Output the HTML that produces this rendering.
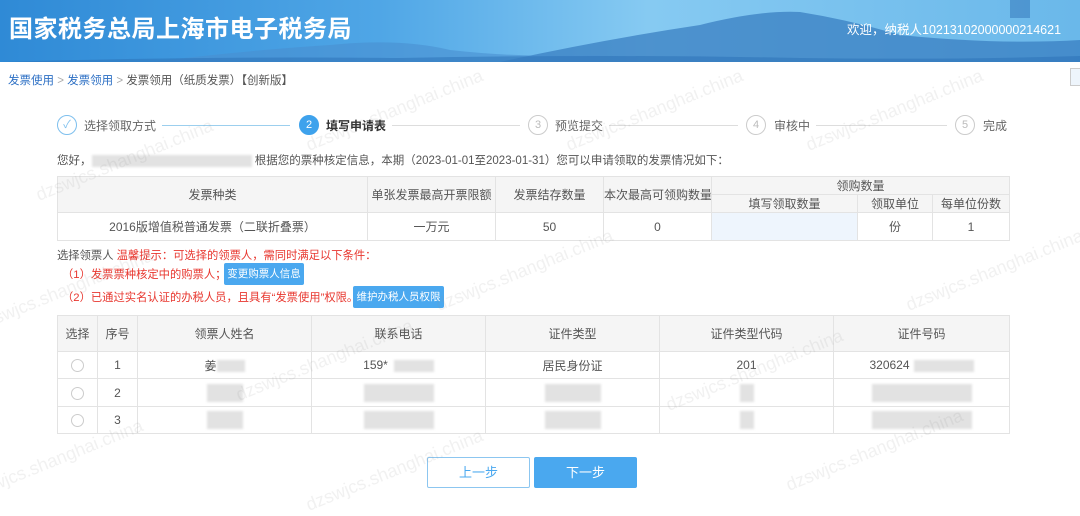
<!DOCTYPE html>
<html><head><meta charset="utf-8"><style>
*{margin:0;padding:0;box-sizing:border-box}
body{width:1080px;height:503px;overflow:hidden;background:#fff;font-family:"Liberation Sans","Noto Sans CJK SC",sans-serif;font-size:12px;color:#555;position:relative}
.abs{position:absolute;white-space:nowrap}
.hdr{position:absolute;left:0;top:0;width:1080px;height:62px;background:linear-gradient(90deg,#2f8ad6 0%,#4fa6e6 35%,#86caf2 60%,#6ab8ea 100%);overflow:hidden}
table{position:absolute;border-collapse:collapse;table-layout:fixed}
td{border:1px solid #e3e3e3;text-align:center;font-size:12px;color:#555;overflow:hidden;white-space:nowrap}
.th td{background:#f5f5f5}
.circ{position:absolute;width:20px;height:20px;border-radius:50%;border:1px solid #ccc;color:#bbb;font-size:11px;text-align:center;line-height:18px}
.line{position:absolute;height:1px;background:#ddd;top:125px}
.red{color:#e8372f}
.btn{position:absolute;background:#4aa8ef;color:#fff;font-size:10.5px;text-align:center;border-radius:2px}
.blur{display:inline-block;background:#e2e2e2;height:12px;vertical-align:middle;filter:blur(1px)}
.wm{position:absolute;color:rgba(150,150,150,.13);font-size:18px;transform:rotate(-22deg);white-space:nowrap}
.radio{display:inline-block;width:13px;height:13px;border:1px solid #ccc;border-radius:50%;vertical-align:middle}
</style></head><body>
<div class="hdr">
<svg width="1080" height="62" style="position:absolute;left:0;top:0">
<path d="M500 62 Q600 40 700 25 Q760 10 800 12 Q850 20 900 35 Q1000 45 1080 40 L1080 62Z" fill="#3a7fc2" opacity=".75"/>
<path d="M150 62 Q250 50 330 45 Q400 38 450 50 Q520 58 600 55 L600 62Z" fill="#4a90d0" opacity=".6"/>
<path d="M0 62 Q200 56 400 58 Q600 54 800 58 Q950 60 1080 56 L1080 62Z" fill="#2a70b5" opacity=".5"/>
<rect x="1010" y="0" width="20" height="18" fill="#3b7fbf" opacity=".6"/>
</svg>
<div class="abs" style="left:9px;top:9px;font-size:24px;font-weight:bold;color:#fff;letter-spacing:0.5px">国家税务总局上海市电子税务局</div>
<div class="abs" style="left:847px;top:19px;font-size:12.5px;color:#fff">欢迎，纳税人10213102000000214621</div>
</div>
<div class="abs" style="left:8px;top:72px;color:#2c6fc4;font-size:11.5px">发票使用 <span style="color:#aaa">&gt;</span> 发票领用 <span style="color:#aaa">&gt;</span> <span style="color:#555">发票领用（纸质发票）【创新版】</span></div>
<div class="abs" style="left:1070px;top:68px;width:12px;height:18px;border:1px solid #ccc;background:#eef5fc"></div>

<div class="circ" style="left:57px;top:115px;border-color:#7fc0ee;color:#7fc0ee">✓</div>
<div class="abs" style="left:84px;top:117px;color:#666">选择领取方式</div>
<div class="line" style="left:162px;width:128px;background:#9ccfee"></div>
<div class="circ" style="left:299px;top:115px;background:#3ea2ec;border-color:#3ea2ec;color:#fff">2</div>
<div class="abs" style="left:326px;top:117px;color:#333;font-weight:bold">填写申请表</div>
<div class="line" style="left:392px;width:128px"></div>
<div class="circ" style="left:528px;top:115px">3</div>
<div class="abs" style="left:555px;top:117px;color:#666">预览提交</div>
<div class="line" style="left:609px;width:129px"></div>
<div class="circ" style="left:746px;top:115px">4</div>
<div class="abs" style="left:774px;top:117px;color:#666">审核中</div>
<div class="line" style="left:816px;width:131px"></div>
<div class="circ" style="left:955px;top:115px">5</div>
<div class="abs" style="left:983px;top:117px;color:#666">完成</div>

<div class="abs" style="left:57px;top:152px;font-size:11.5px">您好，<span class="blur" style="width:160px"></span> 根据您的票种核定信息，本期（2023-01-01至2023-01-31）您可以申请领取的发票情况如下：</div>

<table style="left:57px;top:176px;width:952px">
<colgroup><col style="width:310px"><col style="width:128px"><col style="width:108px"><col style="width:108px"><col style="width:146px"><col style="width:75px"><col style="width:77px"></colgroup>
<tr class="th" style="height:18px"><td rowspan="2">发票种类</td><td rowspan="2">单张发票最高开票限额</td><td rowspan="2">发票结存数量</td><td rowspan="2">本次最高可领购数量</td><td colspan="3">领购数量</td></tr>
<tr class="th" style="height:18px"><td>填写领取数量</td><td>领取单位</td><td>每单位份数</td></tr>
<tr style="height:28px"><td>2016版增值税普通发票（二联折叠票）</td><td>一万元</td><td>50</td><td>0</td><td style="background:#eef5fd"></td><td>份</td><td>1</td></tr>
</table>

<div class="abs" style="left:57px;top:247px;font-size:11.3px">选择领票人 <span class="red">温馨提示：可选择的领票人，需同时满足以下条件：</span></div>
<div class="abs red" style="left:62px;top:266px;font-size:11.3px">（1）发票票种核定中的购票人；</div>
<div class="btn" style="left:224px;top:263px;width:80px;height:22px;line-height:22px">变更购票人信息</div>
<div class="abs red" style="left:62px;top:289px;font-size:11.3px">（2）已通过实名认证的办税人员，且具有“发票使用”权限。</div>
<div class="btn" style="left:353px;top:286px;width:91px;height:22px;line-height:22px">维护办税人员权限</div>

<table style="left:57px;top:315px;width:952px">
<colgroup><col style="width:40px"><col style="width:40px"><col style="width:174px"><col style="width:174px"><col style="width:174px"><col style="width:174px"><col style="width:176px"></colgroup>
<tr class="th" style="height:36px"><td>选择</td><td>序号</td><td>领票人姓名</td><td>联系电话</td><td>证件类型</td><td>证件类型代码</td><td>证件号码</td></tr>
<tr style="height:27px"><td><span class="radio"></span></td><td>1</td><td>姜<span class="blur" style="width:28px"></span></td><td>159*<span class="blur" style="width:40px;margin-left:6px"></span></td><td>居民身份证</td><td>201</td><td>320624<span class="blur" style="width:60px;margin-left:4px"></span></td></tr>
<tr style="height:28px"><td><span class="radio"></span></td><td>2</td><td><span class="blur" style="width:36px;height:18px"></span></td><td><span class="blur" style="width:70px;height:18px"></span></td><td><span class="blur" style="width:56px;height:18px"></span></td><td><span class="blur" style="width:14px;height:18px"></span></td><td><span class="blur" style="width:100px;height:18px"></span></td></tr>
<tr style="height:27px"><td><span class="radio"></span></td><td>3</td><td><span class="blur" style="width:36px;height:18px"></span></td><td><span class="blur" style="width:70px;height:18px"></span></td><td><span class="blur" style="width:56px;height:18px"></span></td><td><span class="blur" style="width:14px;height:18px"></span></td><td><span class="blur" style="width:100px;height:18px"></span></td></tr>
</table>

<div class="abs" style="left:427px;top:457px;width:103px;height:31px;border:1px solid #8cc6f0;color:#4aa8ef;text-align:center;line-height:29px;font-size:13px;border-radius:2px">上一步</div>
<div class="btn" style="left:534px;top:457px;width:103px;height:31px;line-height:31px;font-size:13px">下一步</div>

<div class="wm" style="left:30px;top:150px">dzswjcs.shanghai.china</div>
<div class="wm" style="left:300px;top:100px">dzswjcs.shanghai.china</div>
<div class="wm" style="left:560px;top:100px">dzswjcs.shanghai.china</div>
<div class="wm" style="left:800px;top:100px">dzswjcs.shanghai.china</div>
<div class="wm" style="left:-30px;top:280px">dzswjcs.shanghai.china</div>
<div class="wm" style="left:430px;top:260px">dzswjcs.shanghai.china</div>
<div class="wm" style="left:900px;top:260px">dzswjcs.shanghai.china</div>
<div class="wm" style="left:230px;top:350px">dzswjcs.shanghai.china</div>
<div class="wm" style="left:660px;top:360px">dzswjcs.shanghai.china</div>
<div class="wm" style="left:-40px;top:450px">dzswjcs.shanghai.china</div>
<div class="wm" style="left:300px;top:460px">dzswjcs.shanghai.china</div>
<div class="wm" style="left:780px;top:440px">dzswjcs.shanghai.china</div>
</body></html>
